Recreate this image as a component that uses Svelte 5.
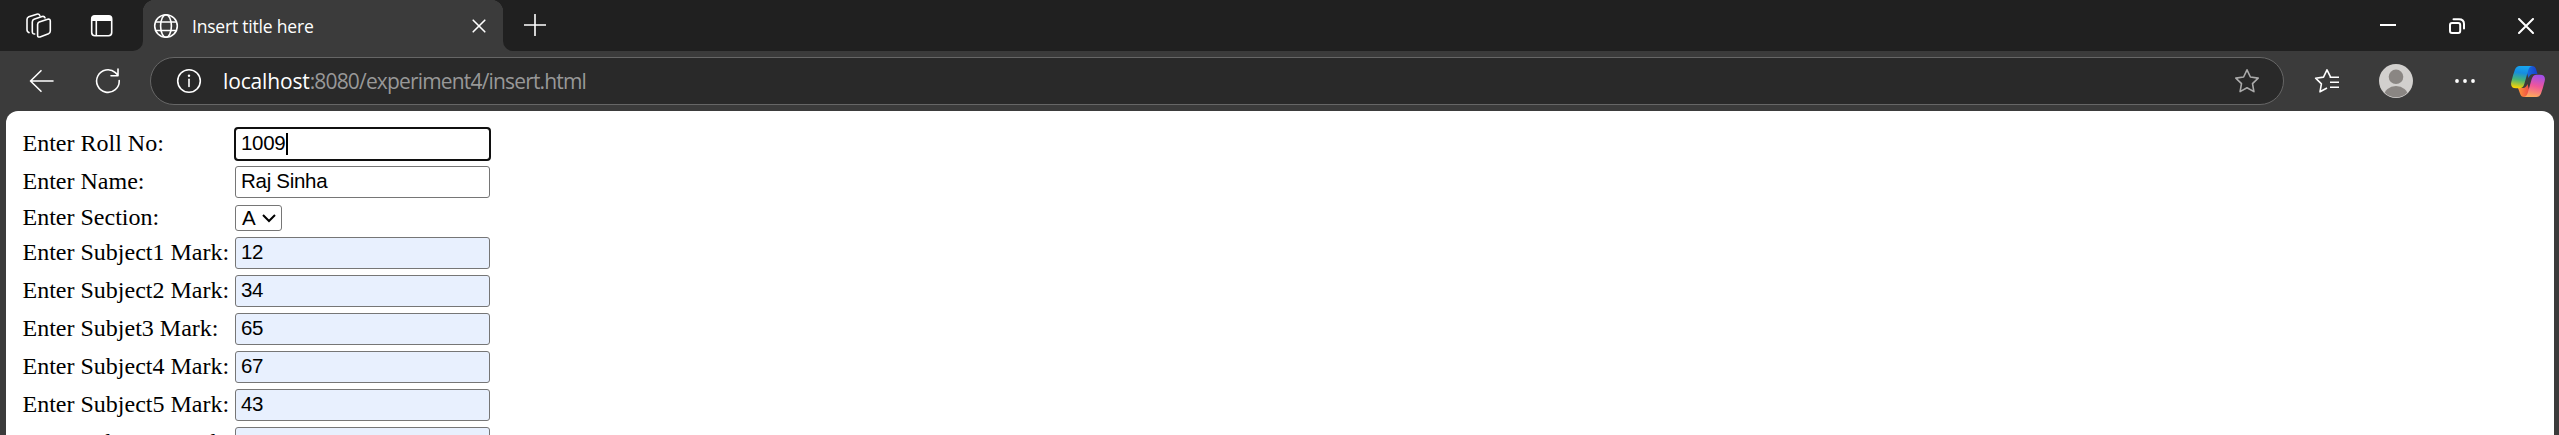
<script>
  const rows = [
    { label: 'Enter Roll No:', value: '1009', kind: 'focus' },
    { label: 'Enter Name:', value: 'Raj Sinha', kind: '' },
    { label: 'Enter Section:', value: 'A', kind: 'select' },
    { label: 'Enter Subject1 Mark:', value: '12', kind: 'filled' },
    { label: 'Enter Subject2 Mark:', value: '34', kind: 'filled' },
    { label: 'Enter Subjet3 Mark:', value: '65', kind: 'filled' },
    { label: 'Enter Subject4 Mark:', value: '67', kind: 'filled' },
    { label: 'Enter Subject5 Mark:', value: '43', kind: 'filled' },
    { label: 'Enter Subject6 Mark:', value: '88', kind: 'filled' }
  ];
</script>

<div class="window">
  <header class="tabs">
    <div class="left">
      <svg class="workspaces" width="26" height="26" viewBox="0 0 26 26"><path d="M13.2 8.5L21.7 5.6Q24.3 5 24.3 7.5V17.5Q24.3 19.4 22.5 20.2L14 23.3Q11.6 24 11.6 21.6V11Q11.6 9.2 13.2 8.5ZM8.7 20.4Q6.3 20.6 6.3 18V8.4Q6.3 6.4 8 5.7L16 2.9Q18.2 2.2 19 4.2M3 19Q1 18.6 1 16V6Q1 4 2.8 3.2L10.8.6Q13 0 13.8 1.9" transform="translate(0 .6)" /></svg>
      <svg class="panel" width="24" height="24" viewBox="0 0 24 24"><rect x="1.7" y="1.7" width="20" height="20" rx="3.2" /><path d="M6.3 7V21" /><path class="solid" d="M1.5 7V5Q1.5 1.5 5 1.5H18.5Q22 1.5 22 5V7Z" /></svg>
    </div>
    <div class="tab">
      <svg class="globe" width="26" height="26" viewBox="0 0 26 26"><circle cx="13" cy="13" r="11.3" /><ellipse cx="13" cy="13" rx="5.4" ry="11.3" /><path d="M2.6 9H23.4M2.6 17.5H23.4" /></svg>
      <span class="title">Insert title here</span>
      <svg class="close" width="14" height="14" viewBox="0 0 14 14"><path d="M1.2 1.2L12.8 12.8M12.8 1.2L1.2 12.8" /></svg>
    </div>
    <div class="rest">
      <svg width="22" height="22" viewBox="0 0 22 22"><path d="M11 .5V21.5M.5 11H21.5" /></svg>
      <div class="controls">
        <svg width="16" height="16" viewBox="0 0 16 16"><path d="M.5 7H15.5" /></svg>
        <svg width="16" height="16" viewBox="0 0 16 16"><rect x="1" y="5" width="10.2" height="10" rx="2" /><path d="M4.5 1.2H10Q15 1.2 15 6V10.5" /></svg>
        <svg width="16" height="16" viewBox="0 0 16 16"><path d="M1 1L15 15M15 1L1 15" /></svg>
      </div>
    </div>
  </header>

  <nav class="toolbar">
    <svg class="back" width="25" height="24" viewBox="0 0 25 24"><path d="M12 1.7L1.5 12L12 22.3M1.5 12H24" /></svg>
    <svg class="reload" width="26" height="26" viewBox="0 0 26 26"><path d="M24.2 12.5A11.3 11.3 0 1 1 20.4 4.6L23 7.3M23 1V7.8H16" /></svg>
    <div class="address">
      <svg class="info" width="26" height="26" viewBox="0 0 26 26"><circle cx="13" cy="13" r="11.3" /><path d="M13 11.2V18.5" /><circle class="dot" cx="13" cy="7.8" r="1.2" /></svg>
      <span class="url"><span class="host">localhost</span><span class="path">:8080/experiment4/insert.html</span></span>
      <svg class="star" width="26" height="26" viewBox="0 0 26 26"><path d="M13 1.8L16.4 9L24.2 10.1L18.5 15.6L19.9 23.6L13 19.8L6.1 23.6L7.5 15.6L1.8 10.1L9.6 9Z" /></svg>
    </div>
    <svg class="favs" width="26" height="26" viewBox="0 0 26 26"><path d="M16.6 9.2L13 1.8L9.5 9.1L1.6 10.2L7.4 15.8L6 23.8L13 20M15.6 9.3H25M16 14.3H25M16 19.3H25" /></svg>
    <svg class="avatar" width="34" height="34" viewBox="0 0 34 34"><defs><clipPath id="face"><circle cx="17" cy="17" r="16.3" /></clipPath></defs><circle cx="17" cy="17" r="17" fill="#d2d0ce" /><g clip-path="url(#face)" fill="#8a8683"><circle cx="17" cy="12.8" r="7.3" /><ellipse cx="17" cy="32" rx="12" ry="10" /></g></svg>
    <svg class="more" width="20" height="4" viewBox="0 0 20 4"><circle cx="2" cy="2" r="1.9" /><circle cx="10" cy="2" r="1.9" /><circle cx="18" cy="2" r="1.9" /></svg>
    <svg class="copilot" width="34" height="31" viewBox="0 0 34 31">
      <defs>
        <linearGradient id="cool" x1=".5" y1="0" x2=".35" y2="1"><stop offset="0" stop-color="#18a5ef" /><stop offset=".3" stop-color="#168de0" /><stop offset=".62" stop-color="#47b477" /><stop offset="1" stop-color="#ffd400" /></linearGradient>
        <linearGradient id="warm" x1=".6" y1="0" x2=".4" y2="1"><stop offset="0" stop-color="#a04eea" /><stop offset=".5" stop-color="#f0569b" /><stop offset="1" stop-color="#ffab5b" /></linearGradient>
        <linearGradient id="blue"><stop offset="0" stop-color="#1c78e0" /><stop offset="1" stop-color="#1640cc" /></linearGradient>
        <linearGradient id="red"><stop offset="0" stop-color="#ff9838" /><stop offset="1" stop-color="#ed3e48" /></linearGradient>
      </defs>
      <path fill="url(#blue)" d="M14 0H21Q24 0 25 3L26.5 8H22Q19 8 17.5 12Z" />
      <path fill="url(#red)" d="M7 22H12Q15 22 16.5 18L20 31H13Q10 31 9 27.5Z" />
      <path fill="url(#cool)" d="M8.5 0H21Q18.3.4 17.3 4L13.3 18Q12 22.3 8.5 22.3H5Q-1 22.3.3 16Q2.2 8 4 3.5Q5.4 0 8.5 0Z" />
      <path fill="url(#warm)" d="M25.5 31H13Q15.7 30.6 16.7 27L20.7 13Q22 8.7 25.5 8.7H29Q35 8.7 33.7 15Q31.8 23 30 27.5Q28.6 31 25.5 31Z" />
    </svg>
  </nav>

  <main class="page">
    {#each rows as row}
      <div class="row {row.kind}">
        <span class="label">{row.label}</span>
        <div class="field">
          <span class="value">{row.value}</span>
          {#if row.kind === 'focus'}<i class="caret"></i>{/if}
          {#if row.kind === 'select'}<svg width="14" height="9" viewBox="0 0 14 9"><path d="M1 1L7 7L13 1" /></svg>{/if}
        </div>
      </div>
    {/each}
  </main>
</div>

<style>
  :global(body) { margin: 0; overflow: hidden; }
  .window { width: 2559px; height: 435px; display: flex; flex-direction: column; overflow: hidden; background: #3b3b3b; font-family: "Open Sans", sans-serif; }
  svg { flex: none; fill: none; stroke: #fff; stroke-width: 1.6; stroke-linejoin: round; stroke-linecap: round; display: block; }
  .tabs { height: 51px; flex: none; display: flex; }
  .left { width: 143px; box-sizing: border-box; padding-left: 26px; display: flex; align-items: center; background: #202020; border-bottom-right-radius: 10px; }
  .workspaces { margin-right: 38px; }
  .panel .solid { fill: #fff; stroke: none; }
  .tab { width: 360px; display: flex; align-items: center; box-sizing: border-box; padding: 1px 17px 0 10px; background: radial-gradient(circle at 12px 12px, #3b3b3b 12px, #202020 12.5px) 0 0 / 12px 12px no-repeat, radial-gradient(circle at 0 12px, #3b3b3b 12px, #202020 12.5px) 100% 0 / 12px 12px no-repeat; }
  .title { margin-left: 13px; flex: 1; color: #fff; font-size: 17.5px; line-height: 24px; letter-spacing: -0.2px; white-space: nowrap; }
  .rest { flex: 1; display: flex; justify-content: space-between; align-items: center; box-sizing: border-box; padding: 0 25px 0 21px; background: #202020; border-bottom-left-radius: 10px; }
  .rest > svg { margin-bottom: 2px; }
  .controls { display: flex; gap: 53px; }
  .controls svg { stroke-width: 2; }
  .toolbar { height: 60px; flex: none; display: flex; align-items: center; box-sizing: border-box; padding: 0 14px 0 29px; }
  .reload { margin-left: 41px; }
  .address { width: 2134px; height: 48px; flex: none; box-sizing: border-box; margin-left: 29px; border: 1.5px solid #666; border-radius: 24px; background: #292929; display: flex; align-items: center; padding: 0 23px 0 25px; }
  .dot { fill: #fff; stroke: none; }
  .url { flex: 1; margin-left: 21px; font-size: 21px; line-height: 30px; white-space: nowrap; color: #989898; }
  .host { color: #fff; letter-spacing: -0.15px; }
  .path { letter-spacing: -0.83px; }
  .star { stroke: #aaa; }
  .favs { margin-left: 30px; stroke-linecap: butt; }
  .avatar { margin-left: 39px; stroke: none; }
  .avatar circle, .avatar g { stroke: none; }
  .more { margin-left: 42px; fill: #fff; stroke: none; }
  .more circle, .copilot path { stroke: none; }
  .copilot { margin-left: 36px; stroke: none; }
  .page { flex: none; height: 324px; box-sizing: border-box; margin: 0 5px 0 6px; padding: 17px 0 0 16px; border-radius: 12px 12px 0 0; background: #fff; overflow: hidden; color: #000; }
  .row { height: 32px; margin-bottom: 6px; display: grid; grid-template-columns: 213px 255px; grid-template-rows: 100%; align-items: center; }
  .row.select { height: 27px; }
  .label { padding: 0 0 2px 0.5px; font: 24px/28px "Liberation Serif", serif; white-space: nowrap; }
  .field { height: 32px; box-sizing: border-box; border: 1px solid #767676; border-radius: 3px; display: flex; align-items: center; padding-left: 5px; font: 20.5px/24px "Liberation Sans", sans-serif; letter-spacing: -0.28px; }
  .value { margin-top: -3px; white-space: nowrap; }
  .filled .field { background: #e8f0fe; }
  .focus .field { outline: 2px solid #101010; outline-offset: -1px; }
  .caret { width: 2px; height: 22px; margin-top: -1px; background: #000; }
  .select .field { width: 47px; height: 26px; margin-top: 1px; padding-left: 6px; }
  .select .value { margin-top: 0; }
  .select svg { margin-left: 7px; stroke: #000; stroke-width: 2; stroke-linecap: butt; stroke-linejoin: miter; }
</style>
